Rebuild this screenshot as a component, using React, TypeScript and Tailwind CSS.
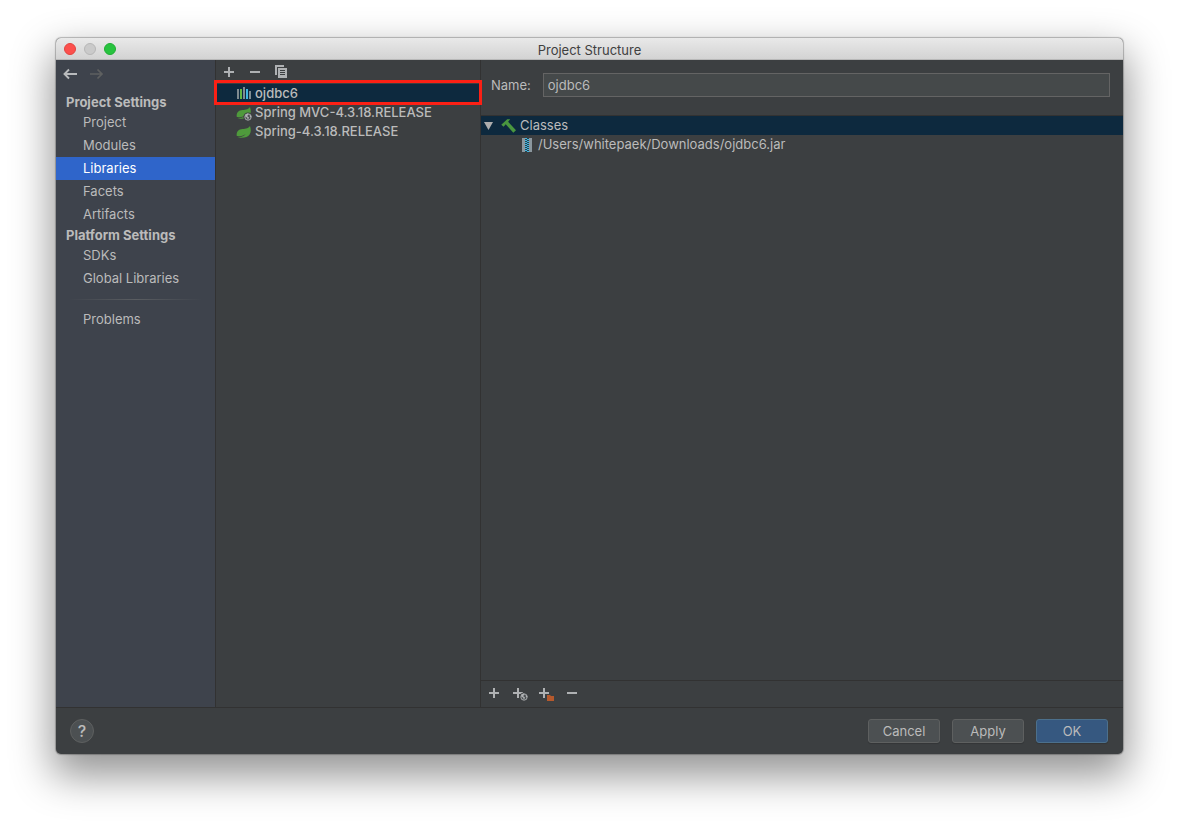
import React from "react";

const iconBase = "block shrink-0";

function Plus() {
  return (
    <svg className={iconBase} width="16" height="16" viewBox="0 0 16 16" fill="#afb1b3">
      <path d="M7 3h2v4h4v2H9v4H7V9H3V7h4z" />
    </svg>
  );
}

function Minus() {
  return (
    <svg className={iconBase} width="16" height="16" viewBox="0 0 16 16" fill="#afb1b3">
      <path d="M3 7h10v2H3z" />
    </svg>
  );
}

function Copy() {
  return (
    <svg className={iconBase} width="16" height="16" viewBox="0 0 16 16" fill="#afb1b3">
      <path d="M2 1h9v2H4v8H2z" />
      <path fillRule="evenodd" d="M5 4h9v10H5zM7 6v1h5V6zM7 8v1h5V8zM7 10v1h5v-1z" />
    </svg>
  );
}

function Globe() {
  return (
    <>
      <circle cx="12" cy="12" r="4.600" fill="#3c3f41" />
      <circle cx="12" cy="12" r="3.200" fill="#4b4f52" stroke="#afb1b3" strokeWidth="0.9" />
      <path d="M9 11.200l.8-2 2.200-.6.6 1.100-1.300 1 .2.900 1.400.6-.2 1.200-1 1-.5-1.600z" fill="#afb1b3" />
      <path d="M13.400 10.600l1.700-.2.300 1.600-1 .6z" fill="#afb1b3" />
    </>
  );
}

function PlusGlobe() {
  return (
    <svg className={iconBase} width="16" height="16" viewBox="0 0 16 16" fill="#afb1b3">
      <path d="M5 3h2v4h4v2H7v4H5V9H1V7h4z" />
      <Globe />
    </svg>
  );
}

function PlusFolder() {
  return (
    <svg className={iconBase} width="16" height="16" viewBox="0 0 16 16" fill="#afb1b3">
      <path d="M5 3h2v4h4v2H7v4H5V9H1V7h4z" />
      <path d="M8 9h8v7H8z" fill="#3c3f41" />
      <path d="M9 10h3l1 1h3v5H9z" fill="#b5592d" />
    </svg>
  );
}

function Arrow({ back = false }: { back?: boolean }) {
  return (
    <svg
      className={iconBase}
      width="16"
      height="16"
      viewBox="0 0 16 16"
      fill="none"
      stroke={back ? "#b9bbbd" : "#5e6060"}
      strokeWidth={back ? 1.9 : 1.7}
    >
      {back ? <path d="M15 8H2.500M7 3.500L2.500 8 7 12.500" /> : <path d="M2 8h12M9.500 3.500L14 8 9.500 12.500" />}
    </svg>
  );
}

function LibraryIcon() {
  return (
    <svg className={iconBase} width="16" height="16" viewBox="0 0 16 16">
      <path d="M1 3h2v10H1z" fill="#7f8b91" />
      <path d="M4 3h2v10H4z" fill="#62b543" />
      <path d="M7 1h2v12H7z" fill="#7f8b91" />
      <path d="M10 3h2v10h-2z" fill="#40b6e0" />
      <path d="M13 5h2v8h-2z" fill="#7f8b91" />
    </svg>
  );
}

function SpringIcon({ web = false }: { web?: boolean }) {
  return (
    <svg className={iconBase} width="16" height="16" viewBox="0 0 16 16">
      <path
        d="M14 2c1 3 1.300 6-.4 8.600C11.500 13.800 6.500 14.400 1.300 13.300c2.600-.2 6-.7 8.600-3.400-2.800 1.800-5.600 2.500-9.100 2.200C.2 8.600 1.800 6 5.200 5.300 8.600 4.600 11.800 5 14 2z"
        fill="#4f9a3c"
      />
      {web && <Globe />}
    </svg>
  );
}

function Hammer() {
  return (
    <svg className={iconBase} width="16" height="16" viewBox="0 0 16 16" fill="#4a973f">
      <path d="M.3 6.800L6.200 1.200l3 .1-2.100 2.400L15 12.200l-2.700 2.500L4.700 6.200 2.600 8.700z" />
    </svg>
  );
}

function Archive() {
  return (
    <svg className={iconBase} width="16" height="16" viewBox="0 0 16 16">
      <path d="M3 1h3v14H3zM10 1h3v14h-3z" fill="#8b979e" />
      <path d="M6 1h4v14H6z" fill="#27424f" />
      <path
        d="M6 1h2v1H6zM8 2h2v1H8zM6 3h2v1H6zM8 4h2v1H8zM6 5h2v1H6zM8 6h2v1H8zM6 7h2v1H6zM8 8h2v1H8zM6 9h2v1H6zM8 10h2v1H8zM6 11h2v1H6zM8 12h2v1H8zM6 13h2v1H6zM8 14h2v1H8z"
        fill="#40b6e0"
      />
    </svg>
  );
}

function IconButton({ label, disabled, children }: { label: string; disabled?: boolean; children: React.ReactNode }) {
  return (
    <button type="button" aria-label={label} disabled={disabled}>
      {children}
    </button>
  );
}

function NavGroup({ title, items, selected }: { title: string; items: string[]; selected?: string }) {
  return (
    <section>
      <h2 className="pl-[10px] text-[13px] leading-[18px] font-bold">{title}</h2>
      <ul>
        {items.map((item) => (
          <li key={item}>
            <a
              href="#"
              className={
                item === selected
                  ? "block bg-[#2f65ca] pl-[27px] leading-[23px] text-white"
                  : "block pl-[27px] leading-[23px]"
              }
            >
              {item}
            </a>
          </li>
        ))}
      </ul>
    </section>
  );
}

export default function App() {
  return (
    <main className="flex min-h-screen bg-white px-14 pt-[38px] pb-[74px] font-['Inter','Liberation_Sans',sans-serif] text-[13px] text-[#bbbbbb]">
      <div className="flex flex-1 flex-col rounded-[5px] bg-[#3c3f41] shadow-[0_0_1px_1px_rgba(0,0,0,0.25),0_18px_40px_4px_rgba(0,0,0,0.42)]">
        <header className="grid h-[22px] grid-cols-[1fr_auto_1fr] items-center rounded-t-[5px] border-b border-[#b8b8b8] bg-linear-to-b from-[#e9e9e9] to-[#d3d3d3] px-2">
          <div className="flex gap-2">
            <button type="button" aria-label="Close" className="size-3 rounded-full border border-[#e2443f] bg-[#fc504d]" />
            <button type="button" aria-label="Minimize" disabled className="size-3 rounded-full border border-[#b7b7b7] bg-[#cacaca]" />
            <button type="button" aria-label="Zoom" className="size-3 rounded-full border border-[#1fae33] bg-[#28c33f]" />
          </div>
          <h1 className="pt-0.5 text-[13px] leading-[18px] text-[#404040]">Project Structure</h1>
        </header>

        <div className="flex flex-1">
          <nav className="w-[160px] shrink-0 border-r border-[#323232] bg-[#3e434c]">
            <div className="flex h-[33px] items-start gap-[10px] px-[6px] pt-[6px]">
              <IconButton label="Back">
                <Arrow back />
              </IconButton>
              <IconButton label="Forward" disabled>
                <Arrow />
              </IconButton>
            </div>
            <NavGroup
              title="Project Settings"
              items={["Project", "Modules", "Libraries", "Facets", "Artifacts"]}
              selected="Libraries"
            />
            <NavGroup title="Platform Settings" items={["SDKs", "Global Libraries"]} />
            <hr className="mx-3 mt-[9px] mb-2 h-px border-0 bg-linear-to-r from-transparent via-[#5a5d61] to-transparent" />
            <a href="#" className="block pl-[27px] leading-[23px]">
              Problems
            </a>
          </nav>

          <section className="w-[265px] shrink-0 border-r border-[#323232]">
            <div className="flex h-6 items-center gap-[10px] px-[5px]">
              <IconButton label="Add">
                <Plus />
              </IconButton>
              <IconButton label="Remove">
                <Minus />
              </IconButton>
              <IconButton label="Copy">
                <Copy />
              </IconButton>
            </div>
            <ul className="leading-[19px] font-medium">
              <li className="relative flex items-center gap-[3px] bg-[#0d293e] pl-5">
                <LibraryIcon />
                ojdbc6
                <span className="absolute -inset-x-[2px] -top-1 -bottom-[2px] border-3 border-[#fb2015]" />
              </li>
              <li className="flex items-center gap-[3px] pl-5">
                <SpringIcon web />
                Spring MVC-4.3.18.RELEASE
              </li>
              <li className="flex items-center gap-[3px] pl-5">
                <SpringIcon />
                Spring-4.3.18.RELEASE
              </li>
            </ul>
          </section>

          <section className="flex min-w-0 flex-1 flex-col">
            <div className="flex items-center gap-3 pt-[13px] pr-[13px] pb-[18px] pl-[10px]">
              <label htmlFor="library-name" className="pt-0.5">
                Name:
              </label>
              <input
                id="library-name"
                defaultValue="ojdbc6"
                className="h-6 min-w-0 flex-1 border border-[#646464] bg-[#45494a] px-1"
              />
            </div>
            <div className="flex-1 border-t border-[#323232] leading-[19px]">
              <div className="flex items-center bg-[#0d293e] pl-[3px]">
                <svg className="block" width="9" height="8" viewBox="0 0 9 8" fill="#adadad">
                  <path d="M0 0h9L4.500 8z" />
                </svg>
                <span className="flex items-center gap-[3px] pl-2">
                  <Hammer />
                  Classes
                </span>
              </div>
              <div className="flex items-center gap-[3px] pl-[38px]">
                <Archive />
                /Users/whitepaek/Downloads/ojdbc6.jar
              </div>
            </div>
            <div className="flex h-[27px] items-center gap-[10px] border-t border-[#323232] px-[5px] pb-0.5">
              <IconButton label="Add">
                <Plus />
              </IconButton>
              <IconButton label="Specify documentation URL">
                <PlusGlobe />
              </IconButton>
              <IconButton label="Exclude">
                <PlusFolder />
              </IconButton>
              <IconButton label="Remove">
                <Minus />
              </IconButton>
            </div>
          </section>
        </div>

        <footer className="flex h-[47px] items-center gap-3 border-t border-[#323232] pr-[15px] pl-[14px]">
          <button
            type="button"
            aria-label="Help"
            className="mr-auto size-6 rounded-full border border-[#5e6060] bg-[#4c5052] text-[16px] leading-[22px] font-medium"
          >
            ?
          </button>
          <button type="button" className="h-6 w-[72px] rounded-[3px] border border-[#5e6060] bg-[#4c5052] pt-0.5 shadow-[0_1px_1px_rgba(0,0,0,0.15)]">
            Cancel
          </button>
          <button type="button" className="h-6 w-[72px] rounded-[3px] border border-[#5e6060] bg-[#4c5052] pt-0.5 shadow-[0_1px_1px_rgba(0,0,0,0.15)]">
            Apply
          </button>
          <button type="button" className="h-6 w-[72px] rounded-[3px] border border-[#4c708c] bg-[#365880] pt-0.5 shadow-[0_1px_1px_rgba(0,0,0,0.15)]">
            OK
          </button>
        </footer>
      </div>
    </main>
  );
}
